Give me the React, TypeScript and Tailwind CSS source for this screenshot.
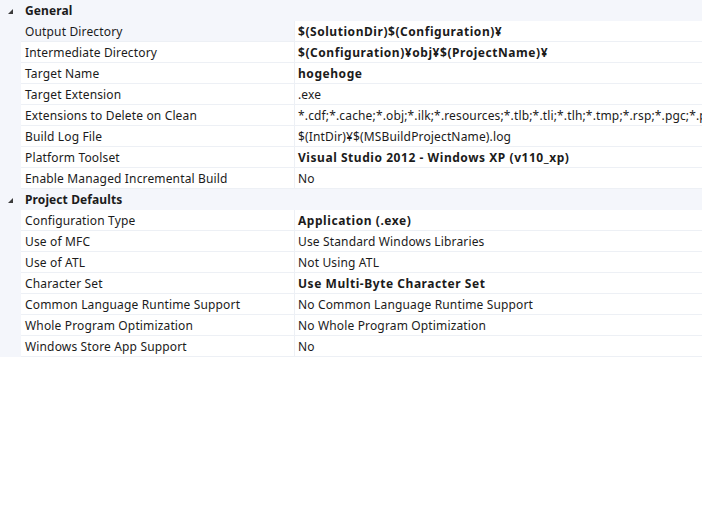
import React from 'react';

type Prop = { name: string; value: string; bold?: boolean; focus?: boolean };
type Group = { title: string; items: Prop[] };

const groups: Group[] = [
  {
    title: 'General',
    items: [
      { name: 'Output Directory', value: '$(SolutionDir)$(Configuration)¥', bold: true, focus: true },
      { name: 'Intermediate Directory', value: '$(Configuration)¥obj¥$(ProjectName)¥', bold: true },
      { name: 'Target Name', value: 'hogehoge', bold: true },
      { name: 'Target Extension', value: '.exe' },
      {
        name: 'Extensions to Delete on Clean',
        value: '*.cdf;*.cache;*.obj;*.ilk;*.resources;*.tlb;*.tli;*.tlh;*.tmp;*.rsp;*.pgc;*.pgd;*.meta;*.tlog;*.manifest;*.res;*.pch;*.exp;*.idb;*.rep;*.xdc;*.pdb;*_manifest.rc;*.bsc;*.sbr;*.xml;*.metagen;*.bi',
      },
      { name: 'Build Log File', value: '$(IntDir)¥$(MSBuildProjectName).log' },
      { name: 'Platform Toolset', value: 'Visual Studio 2012 - Windows XP (v110_xp)', bold: true },
      { name: 'Enable Managed Incremental Build', value: 'No' },
    ],
  },
  {
    title: 'Project Defaults',
    items: [
      { name: 'Configuration Type', value: 'Application (.exe)', bold: true },
      { name: 'Use of MFC', value: 'Use Standard Windows Libraries' },
      { name: 'Use of ATL', value: 'Not Using ATL' },
      { name: 'Character Set', value: 'Use Multi-Byte Character Set', bold: true },
      { name: 'Common Language Runtime Support', value: 'No Common Language Runtime Support' },
      { name: 'Whole Program Optimization', value: 'No Whole Program Optimization' },
      { name: 'Windows Store App Support', value: 'No' },
    ],
  },
];

const Expander = () => (
  <svg width="20" height="21" viewBox="0 0 20 21">
    <polygon points="13,9 13,14 8,14" fill="#3c3c3c" />
  </svg>
);

export default function App() {
  return (
    <div
      className="w-[702px] h-[509px] bg-white text-[12px] text-[#1b1b1b] overflow-hidden"
      style={{ fontFamily: '"Noto Sans", "Liberation Sans", sans-serif' }}
    >
      {groups.map((g) => (
        <div key={g.title}>
          {/* category header */}
          <div className="flex h-[21px] items-center bg-[#f4f6fb]">
            <div className="w-[21px] shrink-0">
              <Expander />
            </div>
            <span className="pl-[4px] font-bold leading-none tracking-[0.1px]">{g.title}</span>
          </div>
          {g.items.map((p) => (
            <div key={p.name} className="flex h-[21px] bg-[#f4f6fb]">
              <div className="w-[21px] shrink-0" />
              <div
                className={`flex w-[273px] shrink-0 items-center border-b border-[#edf0f5] pt-px pl-[4px] whitespace-nowrap tracking-[0.15px] ${
                  p.focus ? 'bg-[#f4f6fb]' : 'bg-white'
                }`}
              >
                {p.name}
              </div>
              <div className="w-px shrink-0 bg-[#edf0f5]" />
              <div
                className={`flex flex-1 min-w-0 items-center overflow-hidden border-b border-[#edf0f5] bg-white pt-px pl-[3px] whitespace-nowrap ${
                  p.bold ? 'font-bold tracking-[0.55px]' : 'tracking-[0.15px]'
                }`}
              >
                {p.value}
              </div>
            </div>
          ))}
        </div>
      ))}
    </div>
  );
}
